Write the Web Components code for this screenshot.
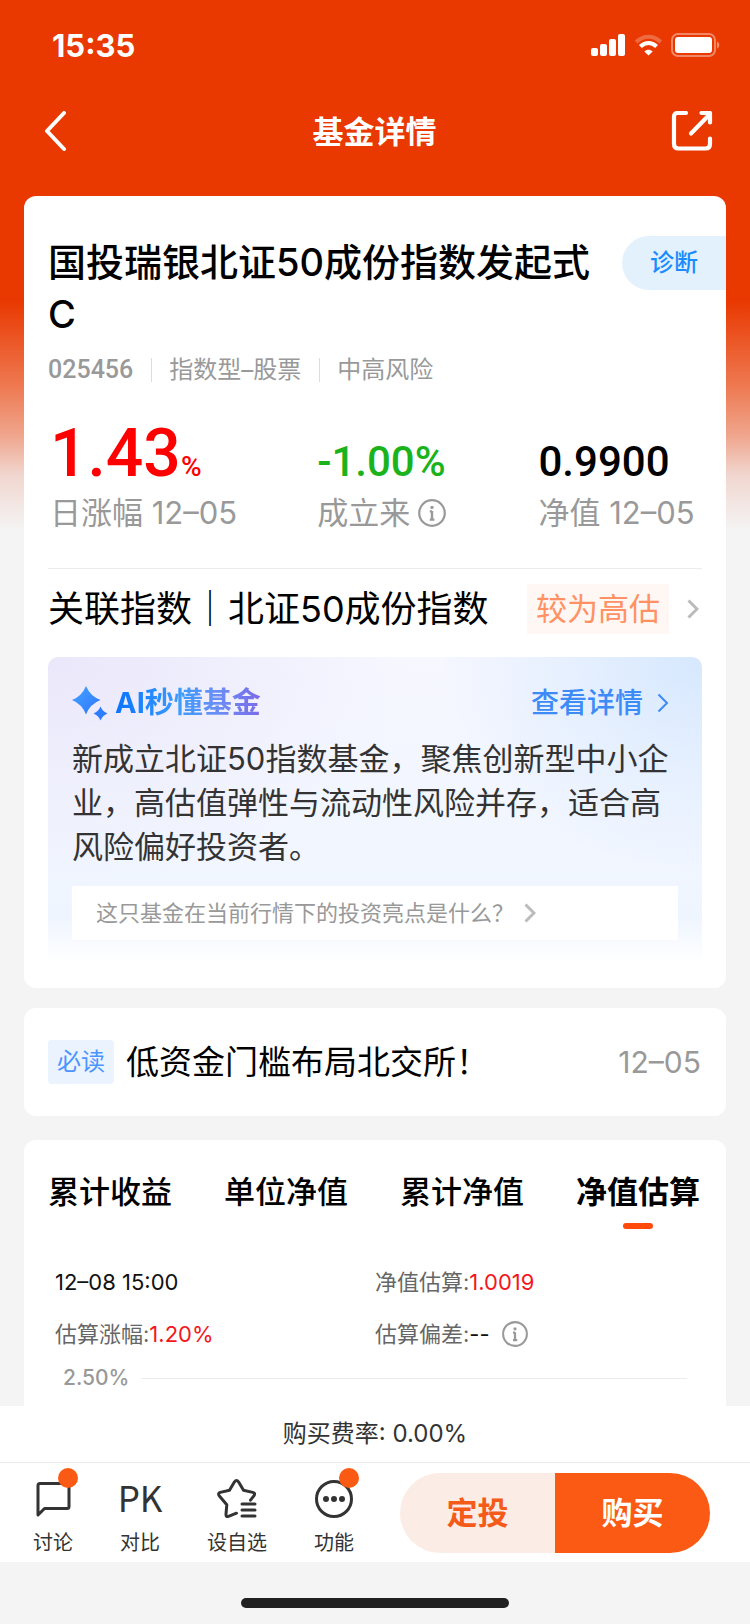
<!DOCTYPE html>
<html lang="zh-CN">
<head>
<meta charset="UTF-8">
<meta name="viewport" content="width=device-width, initial-scale=1">
<title>基金详情</title>
<style>
    :root {
        --font-text: Inter, "Noto Sans CJK SC", sans-serif;
        --font-number: Roboto, sans-serif;
        --color-primary: #fb5a14;
        --color-bg: #f4f4f4;
        --color-text: #333;
        --color-muted: #999;
        --color-rise: #f5161b;
        --color-line: #ececec;
        --color-link: #3d8bf7;
    }
    body {
        margin: 0;
        min-height: 100vh;
        display: flex;
        flex-direction: column;
        font-family: var(--font-text);
        color: #000;
        background: var(--color-bg) linear-gradient(#e93800 300px, #ee7850 385px, #efa58c 435px, #f1d6cf 475px, #f4f4f4 530px) no-repeat;
    }
    main {
        flex: 1;
        display: flex;
        flex-direction: column;
        padding: 0 24px;
    }
    .notice {
        margin: 20px 0 24px;
    }
    .chart {
        flex: 1;
    }
</style>
</head>
<body>
<status-bar time="15:35"></status-bar>
<nav-bar>基金详情</nav-bar>
<main>
    <fund-card>
        <fund-title code="025456" type="指数型–股票" risk="中高风险">国投瑞银北证50成份指数发起式C</fund-title>
        <fund-stats>
            <fund-stat size="large" color="#ff0000" value="1.43" unit="%">日涨幅 12–05</fund-stat>
            <fund-stat color="#1bb31b" value="-1.00%">成立来 <info-icon></info-icon></fund-stat>
            <fund-stat color="#000" value="0.9900">净值 12–05</fund-stat>
        </fund-stats>
        <related-index tag="较为高估">关联指数｜北证50成份指数</related-index>
        <ai-summary question="这只基金在当前行情下的投资亮点是什么？">新成立北证50指数基金，聚焦创新型中小企业，高估值弹性与流动性风险并存，适合高风险偏好投资者。</ai-summary>
    </fund-card>
    <fund-card class="notice">
        <must-read date="12–05">低资金门槛布局北交所！</must-read>
    </fund-card>
    <fund-card class="chart">
        <fund-tabs active="3"></fund-tabs>
        <estimate-panel></estimate-panel>
    </fund-card>
</main>
<bottom-bar></bottom-bar>

<script>
// 公共基类：把静态模板渲染进 shadow root
class BaseElement extends HTMLElement {
    constructor() {
        super();
        this.attachShadow({ mode: "open" });
    }

    connectedCallback() {
        this.shadowRoot.innerHTML = this.render();
    }

    attr(name) {
        return this.getAttribute(name) || "";
    }
}

// 提示图标
class InfoIcon extends BaseElement {
    render() {
        return `
        <style>
            :host {
                display: inline-flex;
                color: var(--color-muted);
            }
            svg {
                width: var(--icon-size, 28px);
                height: var(--icon-size, 28px);
            }
        </style>
        <svg viewBox="0 0 28 28" fill="none" stroke="currentColor" aria-hidden="true">
            <circle cx="14" cy="14" r="12.8" stroke-width="2.2"/>
            <path d="M14 12v9M11.8 12.4h2.2M11.8 20.6h4.6" stroke-width="2.4"/>
            <circle cx="14" cy="8.4" r="1.7" fill="currentColor" stroke="none"/>
        </svg>`;
    }
}

// 右箭头
class ArrowIcon extends BaseElement {
    render() {
        return `
        <style>
            :host {
                display: inline-flex;
                color: #bbb;
            }
            svg {
                width: 12px;
                height: 20px;
            }
        </style>
        <svg viewBox="0 0 12 20" fill="none" stroke="currentColor" stroke-width="${this.attr("weight") || 3}" aria-hidden="true">
            <path d="M1.5 1.5 10 10l-8.500 8.500"/>
        </svg>`;
    }
}

class StatusBar extends BaseElement {
    render() {
        return `
        <style>
            :host {
                display: flex;
                align-items: center;
                justify-content: space-between;
                height: 90px;
                padding: 0 30px 0 52px;
                color: #fff;
                font-size: 31px;
                font-weight: 700;
            }
            .icons {
                display: flex;
                align-items: center;
                gap: 8px;
            }
            svg {
                display: block;
                fill: currentColor;
            }
        </style>
        <span>${this.attr("time")}</span>
        <div class="icons">
            <svg width="35" height="22" viewBox="0 0 35 22">
                <rect x="0" y="14" width="7" height="8" rx="2"/>
                <rect x="9" y="10" width="7" height="12" rx="2"/>
                <rect x="18" y="5" width="7" height="17" rx="2"/>
                <rect x="27" y="0" width="7" height="22" rx="2"/>
            </svg>
            <svg width="29" height="22" viewBox="0 0 29 22">
                <path d="M2.200 8C9.500 1 19.500 1 26.800 8" fill="none" stroke="currentColor" stroke-width="4" opacity=".25"/>
                <path d="M6.400 12.500c5-4.600 11.200-4.600 16.200 0" fill="none" stroke="currentColor" stroke-width="4.200"/>
                <path d="M10.300 17.400c2.600-2.300 5.800-2.300 8.400 0L14.500 21.500z"/>
            </svg>
            <svg width="49" height="24" viewBox="0 0 49 24">
                <rect x="1" y="1" width="43" height="22" rx="6" fill="none" stroke="currentColor" stroke-width="2" opacity=".4"/>
                <rect x="4" y="4" width="37" height="16" rx="3"/>
                <path d="M46 8.500c3 1.200 3 5.800 0 7z" opacity=".45"/>
            </svg>
        </div>`;
    }
}

class NavBar extends BaseElement {
    render() {
        return `
        <style>
            :host {
                display: flex;
                align-items: center;
                justify-content: space-between;
                height: 84px;
                padding: 0 37px 0 36px;
                margin-bottom: 22px;
                color: #fff;
            }
            h1 {
                margin: 0;
                font-size: 31px;
                line-height: 44px;
                font-weight: 700;
            }
            button {
                display: flex;
                padding: 0;
                border: 0;
                color: inherit;
                background: none;
            }
        </style>
        <button aria-label="返回">
            <svg width="42" height="42" viewBox="0 0 42 42" fill="none" stroke="currentColor" stroke-width="4" stroke-linecap="round" stroke-linejoin="round"><path d="M28 2 11 20l17 18"/></svg>
        </button>
        <h1><slot></slot></h1>
        <button aria-label="分享">
            <svg width="42" height="42" viewBox="0 1 42 42" fill="none" stroke="currentColor" stroke-width="4.200" stroke-linecap="round" stroke-linejoin="round">
                <path d="M15 3H6.500Q3 3 3 6.500V34q0 4.500 4.500 4.500h27Q39 38.500 39 34v-5.500"/>
                <path d="M20 23.500 38.500 4.500"/>
                <path d="M30.500 3H39v9.500"/>
                <path d="M33 3h6v6z" fill="currentColor" stroke="none"/>
            </svg>
        </button>`;
    }
}

class FundCard extends BaseElement {
    render() {
        return `
        <style>
            :host {
                display: block;
                border-radius: 12px;
                background: #fff;
            }
            :host(.chart) {
                border-radius: 12px 12px 0 0;
            }
        </style>
        <slot></slot>`;
    }
}

// 基金名称、代码与风险等级
class FundTitle extends BaseElement {
    render() {
        return `
        <style>
            :host {
                display: block;
                padding: 40px 0 0 24px;
            }
            .head {
                display: flex;
                align-items: flex-start;
                justify-content: space-between;
                gap: 16px;
            }
            h2 {
                margin: 0;
                font-size: 38px;
                line-height: 52px;
                font-weight: 500;
                line-break: anywhere;
            }
            button {
                flex: none;
                width: 104px;
                height: 54px;
                padding: 0;
                border: 0;
                border-radius: 27px 0 0 27px;
                font: 500 24px/32px var(--font-text);
                color: #1a8cff;
                background: #e3f1fd;
            }
            .meta {
                display: flex;
                gap: 18px;
                margin-top: 18px;
                font-size: 24px;
                line-height: 24px;
                color: var(--color-muted);
            }
            .meta span + span {
                padding-left: 17px;
                border-left: 1px solid #ddd;
            }
            .code {
                font-family: var(--font-number);
                font-size: 25px;
                font-weight: 500;
            }
        </style>
        <div class="head">
            <h2><slot></slot></h2>
            <button>诊断</button>
        </div>
        <div class="meta">
            <span class="code">${this.attr("code")}</span>
            <span>${this.attr("type")}</span>
            <span>${this.attr("risk")}</span>
        </div>`;
    }
}

class FundStats extends BaseElement {
    render() {
        return `
        <style>
            :host {
                display: grid;
                grid-template-rows: auto auto;
                grid-template-columns: 268fr 222fr 164fr;
                grid-auto-flow: column;
                row-gap: 8px;
                margin: 39px 24px 0;
                padding: 0 0 37px 2px;
                border-bottom: 1px solid var(--color-line);
            }
        </style>
        <slot></slot>`;
    }
}

// 数值与说明各占网格的一行，数值按基线对齐
class FundStat extends BaseElement {
    render() {
        const large = this.attr("size") === "large";
        return `
        <style>
            :host {
                display: contents;
            }
            .value {
                align-self: last baseline;
                color: ${this.attr("color")};
                font-family: var(--font-number);
                font-size: ${large ? 66 : 42}px;
                font-weight: 500;
                line-height: 1;
                white-space: nowrap;
            }
            small {
                font-size: 28px;
            }
            .label {
                display: flex;
                align-items: center;
                gap: 8px;
                font-size: 31px;
                line-height: 36px;
                color: var(--color-muted);
                white-space: nowrap;
            }
        </style>
        <div class="value">${this.attr("value")}<small>${this.attr("unit")}</small></div>
        <div class="label"><slot></slot></div>`;
    }
}

class RelatedIndex extends BaseElement {
    render() {
        return `
        <style>
            :host {
                display: block;
            }
            a {
                display: flex;
                align-items: center;
                height: 80px;
                padding: 0 27px 0 24px;
                font-size: 36px;
                line-height: 50px;
                color: inherit;
                text-decoration: none;
            }
            .tag {
                margin: 0 18px 0 auto;
                padding: 0 9px;
                font-size: 31px;
                color: #ff9163;
                background: #fff7f4;
            }
        </style>
        <a href="#index">
            <slot></slot>
            <span class="tag">${this.attr("tag")}</span>
            <arrow-icon></arrow-icon>
        </a>`;
    }
}

class AiSummary extends BaseElement {
    render() {
        return `
        <style>
            :host {
                display: block;
                padding: 8px 24px 25px;
            }
            section {
                padding: 24px 24px 23px;
                border-radius: 10px;
                background:
                    linear-gradient(transparent 85%, #fff),
                    radial-gradient(ellipse 40% 70% at 100% 0, #d6e8fe, transparent),
                    radial-gradient(ellipse 55% 75% at 0 0, #eae7fa, transparent),
                    linear-gradient(#f6f7ff, #eef5ff);
            }
            header {
                display: flex;
                align-items: center;
                justify-content: space-between;
                height: 44px;
                line-height: 44px;
            }
            h3 {
                display: flex;
                align-items: center;
                gap: 7px;
                margin: 0;
                font-size: 29px;
                font-weight: 700;
            }
            h3 span {
                color: transparent;
                background: linear-gradient(90deg, #0a74ff, #3c9cff 45%, #6b8ef5 70%, #7b6ae8);
                -webkit-background-clip: text;
                background-clip: text;
            }
            header a {
                display: flex;
                align-items: center;
                gap: 14px;
                padding-right: 9px;
                font-size: 28px;
                font-weight: 500;
                color: var(--color-link);
                text-decoration: none;
            }
            arrow-icon.link {
                color: var(--color-link);
            }
            p {
                margin: 12px 0 17px;
                font-size: 31px;
                line-height: 44px;
                color: var(--color-text);
            }
            button {
                display: flex;
                align-items: center;
                gap: 10px;
                width: 100%;
                height: 54px;
                padding: 0 24px;
                border: 0;
                font: 22px/32px var(--font-text);
                color: var(--color-muted);
                background: #fff;
            }
        </style>
        <section>
            <header>
                <h3>
                    <svg width="36" height="36" viewBox="0 0 36 36" aria-hidden="true">
                        <defs>
                            <linearGradient id="star" x1="0" y1="0" x2="1" y2="1">
                                <stop stop-color="#45a4ff"/>
                                <stop offset="1" stop-color="#2f74ff"/>
                            </linearGradient>
                        </defs>
                        <path fill="url(#star)" d="M14 1Q18 11 28.500 15 18 19 14 29.500 10 19 0 15 10 11 14 1z"/>
                        <path fill="#2f7dff" d="M28.500 21.500Q30.500 26.500 35.500 28.500 30.500 30.500 28.500 35.500 26.500 30.500 21.500 28.500 26.500 26.500 28.500 21.500z"/>
                    </svg>
                    <span>AI秒懂基金</span>
                </h3>
                <a href="#detail">查看详情 <arrow-icon class="link" weight="2"></arrow-icon></a>
            </header>
            <p><slot></slot></p>
            <button>${this.attr("question")}<arrow-icon></arrow-icon></button>
        </section>`;
    }
}

class MustRead extends BaseElement {
    render() {
        return `
        <style>
            :host {
                display: block;
            }
            a {
                display: flex;
                align-items: center;
                height: 108px;
                padding: 0 25px 0 24px;
                font-size: 33px;
                line-height: 44px;
                color: inherit;
                text-decoration: none;
            }
            .tag {
                margin-right: 12px;
                padding: 0 9px;
                border-radius: 4px;
                font-size: 24px;
                color: #4a94ff;
                background: #eaf3fe;
            }
            time {
                margin-left: auto;
                font-size: 30px;
                color: var(--color-muted);
            }
        </style>
        <a href="#notice">
            <span class="tag">必读</span>
            <slot></slot>
            <time>${this.attr("date")}</time>
        </a>`;
    }
}

class FundTabs extends BaseElement {
    render() {
        const active = Number(this.attr("active"));
        const tabs = ["累计收益", "单位净值", "累计净值", "净值估算"];
        return `
        <style>
            :host {
                display: flex;
                justify-content: space-between;
                padding: 30px 26px 0 24px;
            }
            button {
                display: flex;
                flex-direction: column;
                align-items: center;
                gap: 9px;
                padding: 0;
                border: 0;
                font: 500 31px/44px var(--font-text);
                color: #000;
                background: none;
            }
            button::after {
                content: "";
                width: 30px;
                height: 6px;
                border-radius: 3px;
            }
            button[aria-selected="true"] {
                font-weight: 700;
            }
            button[aria-selected="true"]::after {
                background: #ff4a0a;
            }
        </style>
        ${tabs.map((t, i) => `<button role="tab" aria-selected="${i === active}">${t}</button>`).join("")}`;
    }

    connectedCallback() {
        super.connectedCallback();
        this.setAttribute("role", "tablist");
        this.shadowRoot.querySelectorAll("button").forEach((btn, i, all) => {
            btn.addEventListener("click", () => {
                all.forEach((b) => b.setAttribute("aria-selected", b === btn));
            });
        });
    }
}

// 净值估算数据与走势图顶部刻度
class EstimatePanel extends BaseElement {
    render() {
        return `
        <style>
            :host {
                display: block;
                padding: 37px 31px 0;
            }
            .grid {
                display: grid;
                grid-template-columns: 1fr 1fr;
                row-gap: 20px;
                font-size: 22px;
                line-height: 32px;
                color: #666;
            }
            .grid div {
                display: flex;
                align-items: center;
            }
            .dark {
                color: #111;
            }
            .rise {
                color: var(--color-rise);
            }
            info-icon {
                --icon-size: 26px;
                margin-left: 12px;
            }
            .axis {
                display: flex;
                align-items: center;
                gap: 12px;
                margin-top: 16px;
                padding: 0 8px;
                font-size: 21px;
                font-weight: 500;
                line-height: 24px;
                color: var(--color-muted);
            }
            .axis::after {
                content: "";
                flex: 1;
                height: 1px;
                background: var(--color-line);
            }
        </style>
        <div class="grid">
            <div class="dark">12–08 15:00</div>
            <div>净值估算:<span class="rise">1.0019</span></div>
            <div>估算涨幅:<span class="rise">1.20%</span></div>
            <div>估算偏差:<span class="dark">--</span><info-icon></info-icon></div>
        </div>
        <div class="axis">2.50%</div>`;
    }
}

class BarItem extends BaseElement {
    render() {
        return `
        <style>
            :host {
                display: block;
            }
            button {
                position: relative;
                display: flex;
                flex-direction: column;
                align-items: center;
                gap: 12px;
                padding: 0;
                border: 0;
                font: 20px/24px var(--font-text);
                color: var(--color-text);
                background: none;
            }
            .icon {
                display: flex;
                align-items: center;
                justify-content: center;
                width: 40px;
                height: 40px;
            }
            :host([badge]) button::before {
                content: "";
                position: absolute;
                top: -11px;
                right: -5px;
                width: 20px;
                height: 20px;
                border-radius: 50%;
                background: var(--color-primary);
            }
        </style>
        <button>
            <span class="icon"><slot></slot></span>
            <span>${this.attr("label")}</span>
        </button>`;
    }
}

class BottomBar extends BaseElement {
    render() {
        return `
        <style>
            :host {
                display: block;
                position: sticky;
                bottom: 0;
                background: #fff;
            }
            .rate {
                font-size: 24px;
                line-height: 56px;
                text-align: center;
                color: var(--color-text);
                border-bottom: 1px solid var(--color-line);
            }
            .bar {
                display: flex;
                align-items: center;
                justify-content: space-between;
                height: 99px;
                padding: 0 40px 0 33px;
            }
            .items {
                display: flex;
                gap: 47px;
                padding-top: 8px;
            }
            svg {
                flex: none;
                fill: none;
                stroke: var(--color-text);
                stroke-width: 3;
                stroke-linecap: round;
                stroke-linejoin: round;
            }
            .pk {
                padding-bottom: 5px;
                font: 35px/35px "Noto Sans CJK SC", sans-serif;
            }
            .actions {
                display: flex;
                border-radius: 40px;
                overflow: hidden;
            }
            .actions button {
                width: 155px;
                height: 80px;
                padding: 0;
                border: 0;
                font: 700 31px/44px var(--font-text);
                color: #f45b19;
                background: #fcece6;
            }
            .actions .buy {
                color: #fff;
                background: var(--color-primary);
            }
            .home {
                display: flex;
                align-items: center;
                justify-content: center;
                height: 62px;
                padding-top: 20px;
                box-sizing: border-box;
                background: var(--color-bg);
            }
            .home::after {
                content: "";
                width: 268px;
                height: 10px;
                border-radius: 5px;
                background: #202020;
            }
        </style>
        <div class="rate">购买费率: 0.00%</div>
        <div class="bar">
            <div class="items">
                <bar-item label="讨论" badge>
                    <svg width="38" height="40" viewBox="0 0 38 40"><path d="M4 36V6.500q0-2 2-2h27q2 0 2 2v21q0 2-2 2H10.500z"/></svg>
                </bar-item>
                <bar-item label="对比"><span class="pk">PK</span></bar-item>
                <bar-item label="设自选">
                    <svg width="42" height="40" viewBox="0 0 42 40">
                        <path d="M20.500 35 12.500 38.200Q9.800 39 10 36l.8-9.500-7.600-9Q1.500 15 4.300 14.200l9.200-2.200 5-8.400q2-2.600 4 0l5 8.400 9.200 2.200q3 .8 1.300 3.300L34.500 22" transform="translate(0 -.8)"/>
                        <path d="M26 25h13M26 31h13M26 37h13"/>
                    </svg>
                </bar-item>
                <bar-item label="功能" badge>
                    <svg width="40" height="40" viewBox="0 0 40 40">
                        <circle cx="20" cy="20" r="17.500"/>
                        <path d="M12 20h0M20 20h0M28 20h0" stroke-width="6"/>
                    </svg>
                </bar-item>
            </div>
            <div class="actions">
                <button>定投</button>
                <button class="buy">购买</button>
            </div>
        </div>
        <div class="home"></div>`;
    }
}

// 注册组件
customElements.define("info-icon", InfoIcon);
customElements.define("arrow-icon", ArrowIcon);
customElements.define("status-bar", StatusBar);
customElements.define("nav-bar", NavBar);
customElements.define("fund-card", FundCard);
customElements.define("fund-title", FundTitle);
customElements.define("fund-stats", FundStats);
customElements.define("fund-stat", FundStat);
customElements.define("related-index", RelatedIndex);
customElements.define("ai-summary", AiSummary);
customElements.define("must-read", MustRead);
customElements.define("fund-tabs", FundTabs);
customElements.define("estimate-panel", EstimatePanel);
customElements.define("bar-item", BarItem);
customElements.define("bottom-bar", BottomBar);
</script>
</body>
</html>
